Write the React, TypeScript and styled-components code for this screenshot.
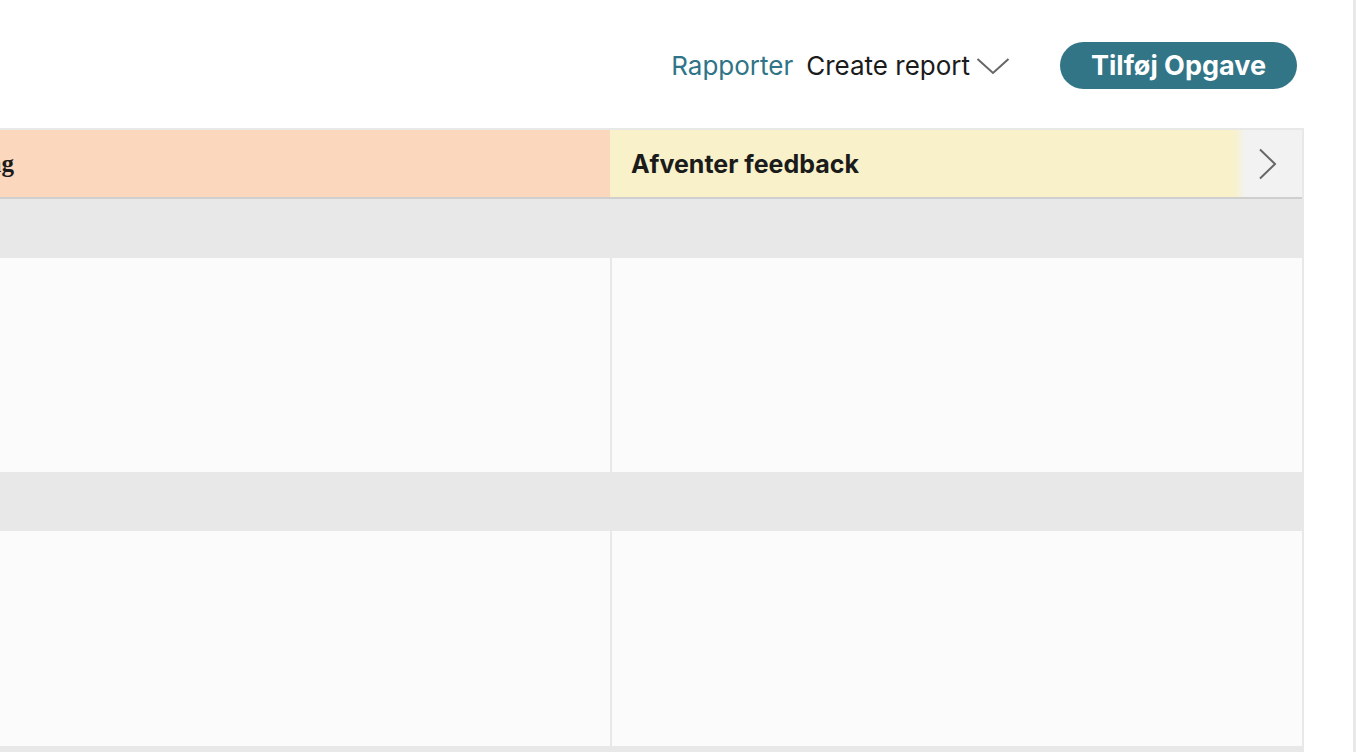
import styled, { createGlobalStyle } from "styled-components";

const GlobalStyle = createGlobalStyle`
  html, body {
    margin: 0;
    padding: 0;
    background: #ffffff;
    font-family: Inter, "Noto Sans", "Liberation Sans", sans-serif;
    color: #1b1b1b;
  }
`;

const Page = styled.div`
  display: flex;
  width: 1356px;
  height: 752px;
  overflow: hidden;
`;

const Main = styled.div`
  flex: 1;
  display: flex;
  flex-direction: column;
  min-width: 0;
`;

const Rail = styled.div`
  width: 3px;
  background: #e8e8e8;
`;

const TopBar = styled.div`
  height: 128px;
  display: flex;
  align-items: center;
  justify-content: flex-end;
  padding: 3px 56px 0 0;
  box-sizing: border-box;
`;

const Link = styled.a`
  color: #2f7487;
  font-size: 26px;
  text-decoration: none;
  cursor: pointer;
  margin-right: 13px;
`;

const Dropdown = styled.div`
  display: flex;
  align-items: center;
  gap: 6px;
  font-size: 26px;
  color: #1b1b1b;
  margin-right: 50px;
  cursor: pointer;
`;

const PrimaryButton = styled.button`
  all: unset;
  box-sizing: border-box;
  height: 47px;
  padding: 0 31px;
  border-radius: 24px;
  background: #327587;
  color: #ffffff;
  font-family: Inter, "Noto Sans", sans-serif;
  font-size: 27px;
  font-weight: 700;
  display: flex;
  align-items: center;
  cursor: pointer;
`;

const Board = styled.div`
  width: 1304px;
  flex: 1;
  display: grid;
  grid-template-columns: 610px 692px;
  grid-template-rows: 69px 59px 214px 59px 215px;
  border-top: 2px solid #e8e8e8;
  border-right: 2px solid #e8e8e8;
  border-bottom: 6px solid #e8e8e8;
  position: relative;
  box-sizing: border-box;
  overflow: hidden;
`;

const HeaderCell = styled.div<{ $tone: string; $clipped?: boolean }>`
  background: ${(p) => p.$tone};
  border-bottom: 2px solid #cfcfcf;
  display: flex;
  align-items: center;
  justify-content: ${(p) => (p.$clipped ? "flex-end" : "flex-start")};
  padding: ${(p) => (p.$clipped ? "0 596px 0 0" : "0 0 0 21px")};
  overflow: hidden;
  white-space: nowrap;
  font-size: 25px;
  font-weight: 700;
  color: #1b1b1b;
  font-family: ${(p) =>
    p.$clipped ? '"Liberation Serif", serif' : 'Inter, "Noto Sans", sans-serif'};
`;

const GroupRow = styled.div`
  grid-column: 1 / -1;
  background: #e8e8e8;
`;

const Cell = styled.div<{ $divider?: boolean }>`
  background: #fbfbfb;
  border-left: ${(p) => (p.$divider ? "2px solid #e8e8e8" : "none")};
`;

const ScrollNext = styled.button`
  all: unset;
  position: absolute;
  top: 0;
  right: 0;
  width: 68px;
  height: 69px;
  box-sizing: border-box;
  border-bottom: 2px solid #cfcfcf;
  background: linear-gradient(
    to right,
    rgba(242, 242, 242, 0) 0px,
    #f2f2f2 11px
  );
  display: flex;
  align-items: center;
  justify-content: flex-end;
  padding-right: 24px;
  cursor: pointer;
`;

const ChevronDown = () => (
  <svg width="34" height="18" viewBox="0 0 34 18" fill="none">
    <path d="M1.5 2 L17 16 L32.5 2" stroke="#666" strokeWidth="2" />
  </svg>
);

const ChevronRight = () => (
  <svg width="20" height="32" viewBox="0 0 20 32" fill="none">
    <path d="M2 1.5 L17 16 L2 30.5" stroke="#666" strokeWidth="2" />
  </svg>
);

export default function App() {
  return (
    <>
      <GlobalStyle />
      <Page>
        <Main>
          <TopBar>
            <Link>Rapporter</Link>
            <Dropdown>
              Create report
              <ChevronDown />
            </Dropdown>
            <PrimaryButton>Tilføj Opgave</PrimaryButton>
          </TopBar>
          <Board>
            <HeaderCell $tone="#fad7bd" $clipped>
              Under behandling
            </HeaderCell>
            <HeaderCell $tone="#f8f1c9">Afventer feedback</HeaderCell>
            <GroupRow />
            <Cell />
            <Cell $divider />
            <GroupRow />
            <Cell />
            <Cell $divider />
            <ScrollNext aria-label="Næste kolonner">
              <ChevronRight />
            </ScrollNext>
          </Board>
        </Main>
        <Rail />
      </Page>
    </>
  );
}
